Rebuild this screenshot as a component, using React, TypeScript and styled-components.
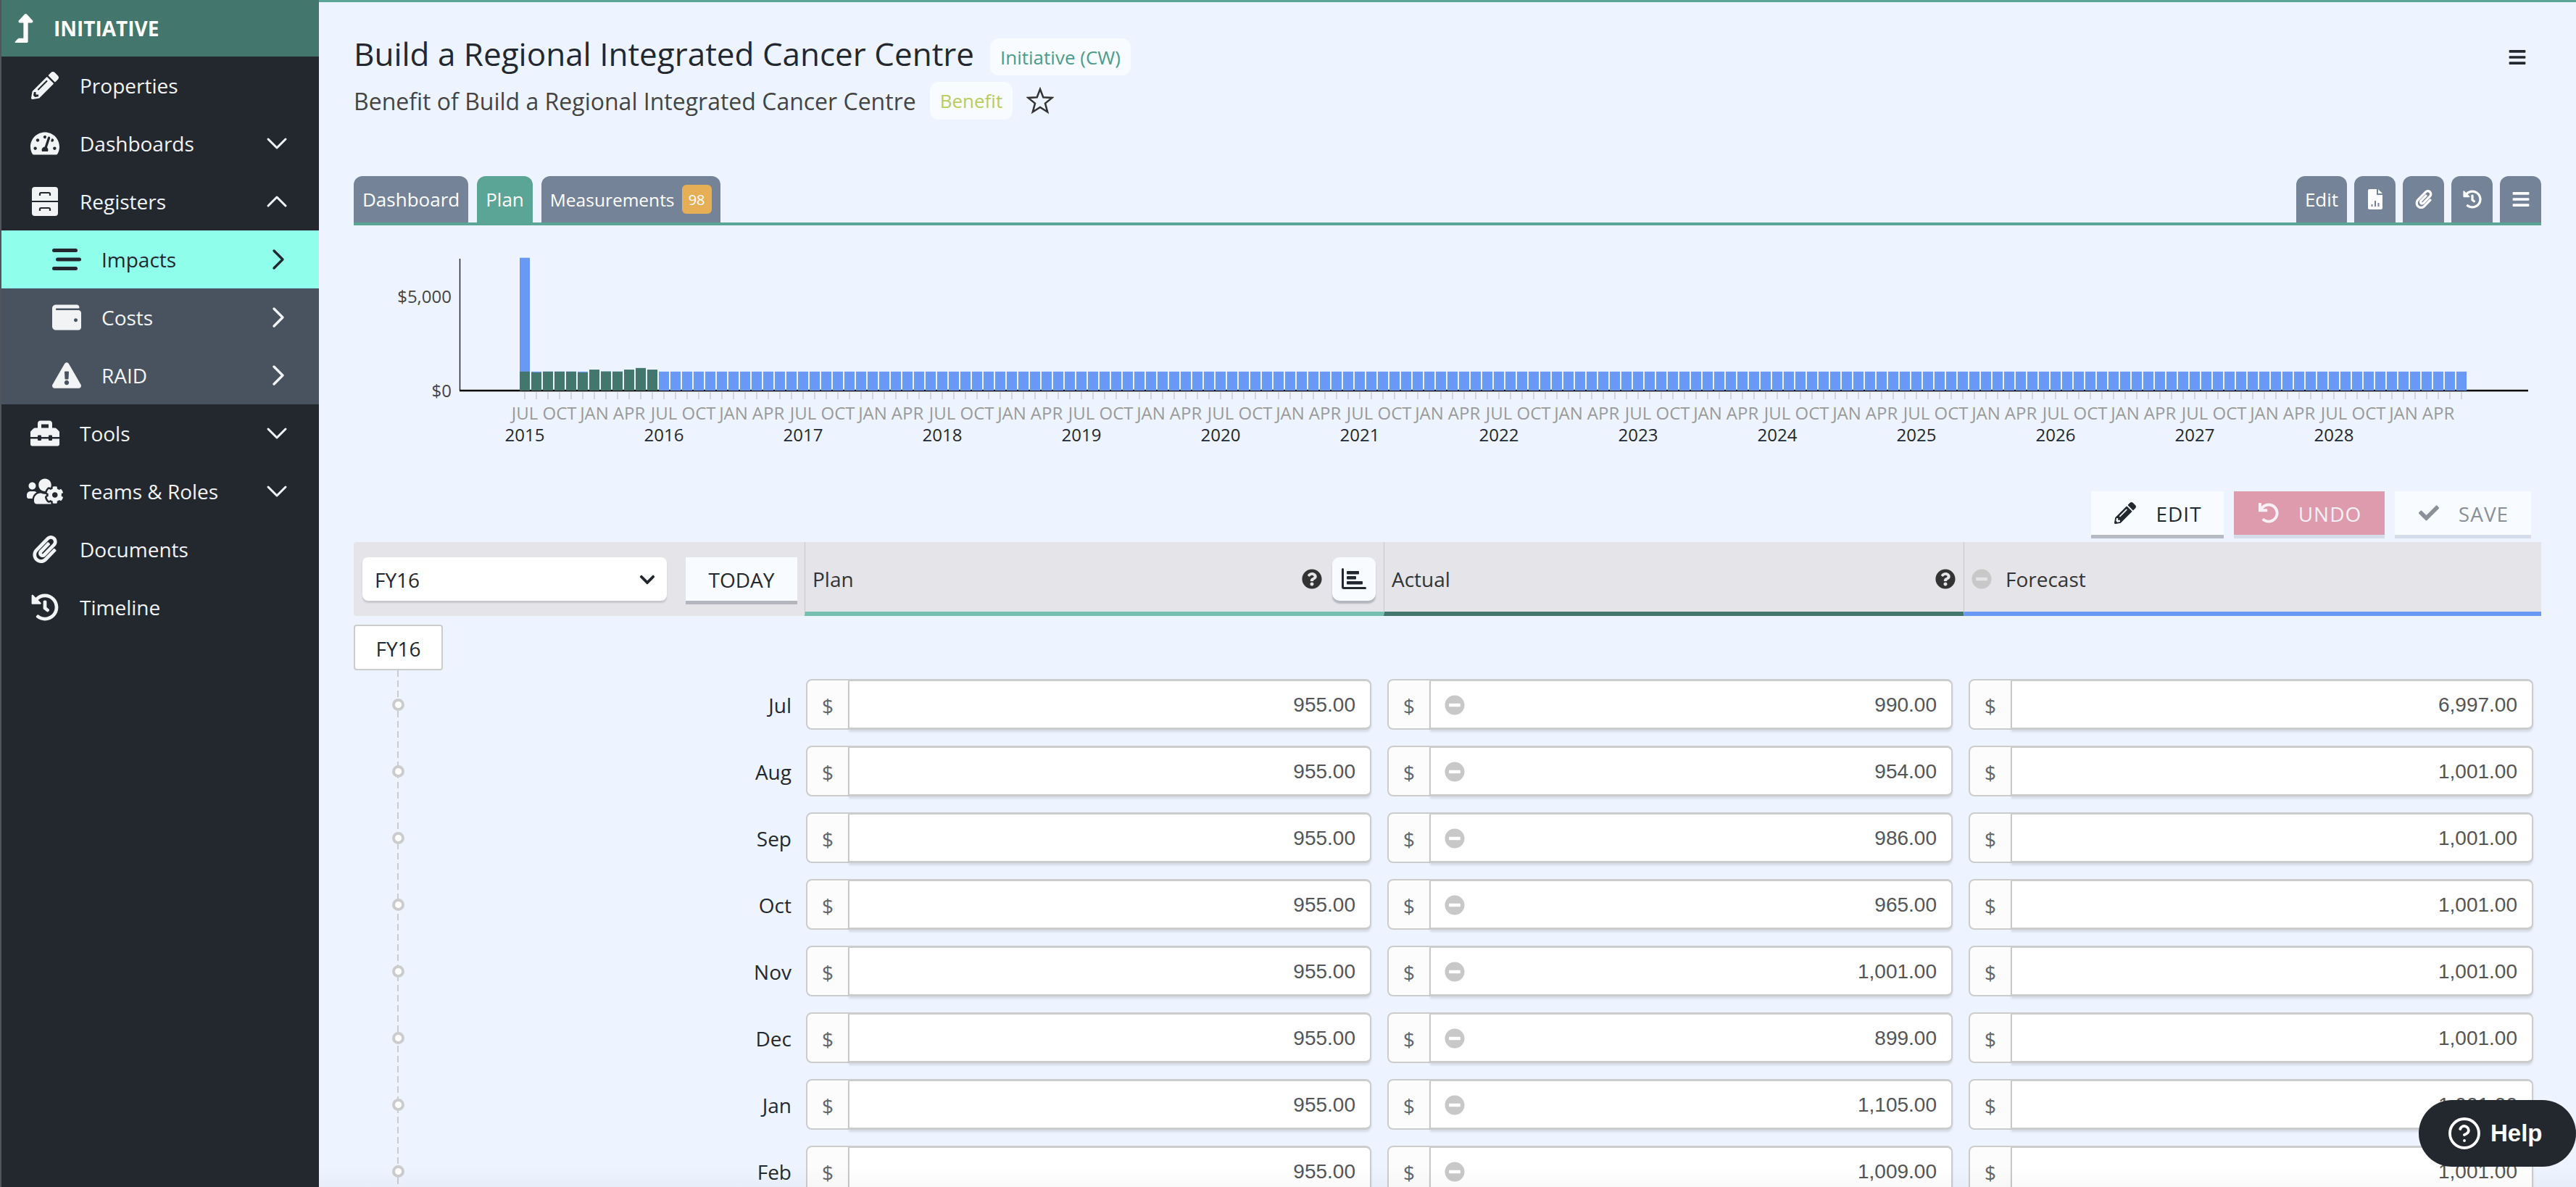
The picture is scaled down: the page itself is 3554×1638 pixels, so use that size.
import React from "react";
import styled, { createGlobalStyle } from "styled-components";
import {
  FaBars,
  FaCheck,
  FaChevronDown,
  FaExclamationTriangle,
  FaHistory,
  FaLevelUpAlt,
  FaMinusCircle,
  FaPaperclip,
  FaPencilAlt,
  FaQuestionCircle,
  FaTachometerAlt,
  FaToolbox,
  FaUndo,
  FaUsersCog,
  FaWallet,
} from "react-icons/fa";
import { ChevronDown, ChevronRight, ChevronUp, CircleHelp } from "lucide-react";

const GlobalStyle = createGlobalStyle`
  html, body {
    margin: 0;
    height: 100%;
    overflow: hidden;
    background: #edf4ff;
    font-family: "Open Sans", sans-serif;
    color: #23282f;
  }
  * { box-sizing: border-box; }
`;

const RegistersIcon = () => (
  <svg width="36" height="40" viewBox="0 0 36 40" fill="currentColor">
    <path d="M4 0h28a4 4 0 0 1 4 4v15H0V4a4 4 0 0 1 4-4z" />
    <path d="M0 21h36v15a4 4 0 0 1-4 4H4a4 4 0 0 1-4-4V21z" />
    <path d="M11 12V9.500a1.500 1.500 0 0 1 1.500-1.500h11A1.500 1.500 0 0 1 25 9.500V12" fill="none" stroke="#23282f" strokeWidth="2.200" />
    <path d="M11 33v-2.500a1.500 1.500 0 0 1 1.500-1.500h11a1.500 1.500 0 0 1 1.500 1.500V33" fill="none" stroke="#23282f" strokeWidth="2.200" />
  </svg>
);

const ImpactsIcon = () => (
  <svg width="40" height="30" viewBox="0 0 40 30" fill="currentColor">
    <rect x="0" y="0" width="35" height="5" rx="2.500" />
    <rect x="5" y="12.500" width="35" height="5" rx="2.500" />
    <rect x="0" y="25" width="35" height="5" rx="2.500" />
  </svg>
);

const FileChartIcon = () => (
  <svg width="20" height="28" viewBox="0 0 20 28" fill="currentColor">
    <path d="M2 0h10v8h8v18a2 2 0 0 1-2 2H2a2 2 0 0 1-2-2V2a2 2 0 0 1 2-2zM14 0l6 6h-6V0zM4.500 21v3h2v-3h-2zM9 16v8h2v-8H9zm4.500 3v5h2v-5h-2z" fillRule="evenodd" />
  </svg>
);

const AxisBarsIcon = () => (
  <svg width="34" height="30" viewBox="0 0 34 30" fill="currentColor">
    <path d="M0 1.500a1.500 1.500 0 0 1 3 0V26h29.500a1.500 1.500 0 0 1 0 3H3a3 3 0 0 1-3-3V1.500z" />
    <rect x="7" y="4" width="17" height="4.500" rx="1" />
    <rect x="7" y="11" width="13" height="4.500" rx="1" />
    <rect x="7" y="18" width="22" height="4.500" rx="1" />
  </svg>
);

const StarOutline = () => (
  <svg width="38" height="38" viewBox="0 0 38 38" fill="none">
    <polygon
      points="19,3 23.300,14.200 35.500,14.900 26,22.600 29.200,34.500 19,27.900 8.800,34.500 12,22.600 2.500,14.900 14.700,14.200"
      stroke="#333"
      strokeWidth="2.500"
    />
  </svg>
);

type MenuRow = {
  label: string;
  icon: React.ReactNode;
  arrow?: "down" | "up" | "right";
  sub?: boolean;
  active?: boolean;
};

const menu: MenuRow[] = [
  { label: "Properties", icon: <FaPencilAlt size={38} /> },
  { label: "Dashboards", icon: <FaTachometerAlt size={40} />, arrow: "down" },
  { label: "Registers", icon: <RegistersIcon />, arrow: "up" },
  { label: "Impacts", icon: <ImpactsIcon />, arrow: "right", sub: true, active: true },
  { label: "Costs", icon: <FaWallet size={40} />, arrow: "right", sub: true },
  { label: "RAID", icon: <FaExclamationTriangle size={40} />, arrow: "right", sub: true },
  { label: "Tools", icon: <FaToolbox size={40} />, arrow: "down" },
  { label: "Teams & Roles", icon: <FaUsersCog size={50} />, arrow: "down" },
  { label: "Documents", icon: <FaPaperclip size={38} /> },
  { label: "Timeline", icon: <FaHistory size={38} /> },
];

const months = ["Jul", "Aug", "Sep", "Oct", "Nov", "Dec", "Jan", "Feb"];
const plan = ["955.00", "955.00", "955.00", "955.00", "955.00", "955.00", "955.00", "955.00"];
const actual = ["990.00", "954.00", "986.00", "965.00", "1,001.00", "899.00", "1,105.00", "1,009.00"];
const forecast = ["6,997.00", "1,001.00", "1,001.00", "1,001.00", "1,001.00", "1,001.00", "1,001.00", "1,001.00"];

const BAR_COUNT = 168;
const actualBars = [1001, 954, 1001, 1001, 1001, 954, 1105, 1009, 1001, 1105, 1190, 1105];
const tickLabels = ["JUL", "OCT", "JAN", "APR"];

function PlanChart() {
  const base = 228;
  const scale = 0.0262;
  const x0 = 229;
  return (
    <ChartSvg width="3018" height="349" viewBox="0 0 3018 349">
      <line x1="146.500" y1="46" x2="146.500" y2={base} stroke="#23282f" strokeWidth="1.500" />
      <line x1="146" y1={base} x2="3000" y2={base} stroke="#000" strokeWidth="2.500" />
      <text x="135" y="107" textAnchor="end" fontSize="24" fill="#444">$5,000</text>
      <text x="135" y="237" textAnchor="end" fontSize="24" fill="#444">$0</text>
      {Array.from({ length: BAR_COUNT }, (_, i) => {
        const x = x0 + i * 16;
        const blue = (i === 0 ? 6997 : 1001) * scale;
        const green = i < actualBars.length ? actualBars[i] * scale : 0;
        return (
          <g key={i}>
            <rect x={x} y={base - blue} width="14" height={blue} fill="#6a98f5" />
            {green > 0 && <rect x={x} y={base - green} width="14" height={green} fill="#43766c" />}
            <line x1={x + 7} y1="230" x2={x + 7} y2="240" stroke="#ccc" strokeWidth="1.500" />
            {i % 3 === 0 && (
              <text x={x + 7} y="268" textAnchor="middle" fontSize="24" fill="#9a9a9a">
                {tickLabels[(i / 3) % 4]}
              </text>
            )}
            {i % 12 === 0 && (
              <text x={x + 7} y="298" textAnchor="middle" fontSize="24" fill="#23282f">
                {2015 + i / 12}
              </text>
            )}
          </g>
        );
      })}
    </ChartSvg>
  );
}

function MoneyInput({ value, minus }: { value: string; minus?: boolean }) {
  return (
    <InputGroup>
      <Prefix>$</Prefix>
      <InputBox>
        {minus && <FaMinusCircle size={28} color="#c8c8c8" />}
        <InputValue>{value}</InputValue>
      </InputBox>
    </InputGroup>
  );
}

export default function App() {
  return (
    <Page>
      <GlobalStyle />
      <Sidebar>
        <SideHeader>
          <FaLevelUpAlt size={40} />
          <span>INITIATIVE</span>
        </SideHeader>
        {menu.map((m) => (
          <MenuItem key={m.label} $sub={m.sub} $active={m.active}>
            <MenuIcon>{m.icon}</MenuIcon>
            <MenuLabel>{m.label}</MenuLabel>
            {m.arrow === "down" && <ChevronDown size={48} strokeWidth={1.5} />}
            {m.arrow === "up" && <ChevronUp size={48} strokeWidth={1.5} />}
            {m.arrow === "right" && <ChevronRight size={48} strokeWidth={1.7} />}
          </MenuItem>
        ))}
      </Sidebar>

      <Main>
        <TitleRow>
          <Title>Build a Regional Integrated Cancer Centre</Title>
          <Badge $color="#4b9c8b">Initiative (CW)</Badge>
          <Burger>
            <FaBars size={26} />
          </Burger>
        </TitleRow>
        <SubRow>
          <SubTitle>Benefit of Build a Regional Integrated Cancer Centre</SubTitle>
          <Badge $color="#b9cc5c">Benefit</Badge>
          <StarOutline />
        </SubRow>

        <TabBar>
          <TabGroup>
            <Tab>Dashboard</Tab>
            <Tab $active>Plan</Tab>
            <MeasureTab>
              Measurements
              <TabCount>98</TabCount>
            </MeasureTab>
          </TabGroup>
          <ToolTabs>
            <EditTab>Edit</EditTab>
            <IconTab><FileChartIcon /></IconTab>
            <IconTab><FaPaperclip size={26} /></IconTab>
            <IconTab><FaHistory size={26} /></IconTab>
            <IconTab><FaBars size={26} /></IconTab>
          </ToolTabs>
        </TabBar>

        <PlanChart />

        <Actions>
          <ActionButton $width={183} $shadow="#b5bac4">
            <FaPencilAlt size={30} />
            <span>EDIT</span>
          </ActionButton>
          <ActionButton $width={208} $bg="#dd9bad" $color="#f6f1f6" $shadow="#d5dcea">
            <FaUndo size={28} />
            <span>UNDO</span>
          </ActionButton>
          <ActionButton $width={188} $color="#8a8f98" $shadow="#d5dcea">
            <FaCheck size={28} />
            <span>SAVE</span>
          </ActionButton>
        </Actions>

        <GridHeader>
          <PeriodCell>
            <PeriodSelect>
              <span>FY16</span>
              <FaChevronDown size={24} />
            </PeriodSelect>
            <TodayButton>TODAY</TodayButton>
          </PeriodCell>
          <HeadCell $line="#75bfb0">
            Plan
            <HeadTools>
              <FaQuestionCircle size={28} color="#333" />
              <ChartToggle>
                <AxisBarsIcon />
              </ChartToggle>
            </HeadTools>
          </HeadCell>
          <HeadCell $line="#43766c">
            Actual
            <HeadTools>
              <FaQuestionCircle size={28} color="#333" />
            </HeadTools>
          </HeadCell>
          <HeadCell $line="#6a98f5">
            <FaMinusCircle size={28} color="#c8c8c8" />
            Forecast
          </HeadCell>
        </GridHeader>

        <YearBox>FY16</YearBox>
        <Rows>
          {months.map((month, i) => (
            <Row key={month}>
              <RowLabel>
                <Dot />
                <MonthName>{month}</MonthName>
              </RowLabel>
              <MoneyInput value={plan[i]} />
              <MoneyInput value={actual[i]} minus />
              <MoneyInput value={forecast[i]} />
            </Row>
          ))}
        </Rows>
      </Main>

      <HelpButton>
        <CircleHelp size={48} strokeWidth={1.9} />
        Help
      </HelpButton>
    </Page>
  );
}

const Page = styled.div`
  display: flex;
  width: 100vw;
  height: 100vh;
  overflow: hidden;
`;

const Sidebar = styled.nav`
  flex: 0 0 440px;
  border-left: 2px solid #50555c;
  background: #23282f;
  color: #f1f3f5;
`;

const SideHeader = styled.div`
  display: flex;
  align-items: center;
  gap: 21px;
  height: 78px;
  padding-left: 11px;
  background: #43766c;
  color: #fff;
  font-size: 28px;
  font-weight: 700;
`;

const MenuItem = styled.div<{ $sub?: boolean; $active?: boolean }>`
  display: flex;
  align-items: center;
  height: 80px;
  padding: 0 ${(p) => (p.$sub ? 32 : 34)}px 0 ${(p) => (p.$sub ? 70 : 40)}px;
  background: ${(p) => (p.$active ? "#8ffeea" : p.$sub ? "#49525f" : "transparent")};
  color: ${(p) => (p.$active ? "#23282f" : "inherit")};
`;

const MenuIcon = styled.div`
  display: flex;
  align-items: center;
  justify-content: center;
  flex: 0 0 40px;
  min-width: 0;
  height: 50px;
  svg {
    flex-shrink: 0;
  }
`;

const MenuLabel = styled.div`
  flex: 1;
  margin-left: 28px;
  font-size: 28px;
`;

const Main = styled.main`
  position: relative;
  flex: 1;
  min-width: 0;
  padding: 50px 48px 0;
  border-top: 3px solid #5aa596;
  background: #edf4ff;
  &::after {
    content: "";
    position: absolute;
    left: 0;
    right: 0;
    bottom: 0;
    height: 28px;
    background: linear-gradient(transparent, rgba(0, 0, 0, 0.025));
  }
`;

const TitleRow = styled.div`
  display: flex;
  align-items: center;
  height: 51px;
`;

const Title = styled.h1`
  margin: 0 22px 9px 0;
  font-size: 44px;
  font-weight: 400;
  line-height: 1;
`;

const Burger = styled.div`
  display: flex;
  margin-left: auto;
  margin-right: 20px;
`;

const SubRow = styled.div`
  display: flex;
  align-items: center;
  gap: 19px;
  height: 52px;
  margin-top: 9px;
`;

const SubTitle = styled.div`
  font-size: 32px;
  color: #444;
`;

const Badge = styled.div<{ $color: string }>`
  display: flex;
  align-items: center;
  height: 100%;
  padding: 0 14px;
  border-radius: 12px;
  background: #f8fbff;
  color: ${(p) => p.$color};
  font-size: 26px;
`;

const TabBar = styled.div`
  display: flex;
  justify-content: space-between;
  height: 68px;
  margin-top: 78px;
  border-bottom: 4px solid #5aa596;
`;

const TabGroup = styled.div`
  display: flex;
  gap: 12px;
`;

const ToolTabs = styled.div`
  display: flex;
  gap: 10px;
`;

const Tab = styled.div<{ $active?: boolean }>`
  display: flex;
  align-items: center;
  padding: 0 12px;
  border-radius: 12px 12px 0 0;
  background: ${(p) => (p.$active ? "#5aa596" : "#758398")};
  color: #fff;
  font-size: 26px;
`;

const MeasureTab = styled(Tab)`
  font-size: 24.5px;
`;

const EditTab = styled(Tab)`
  justify-content: center;
  width: 70px;
  padding: 0;
`;

const IconTab = styled(Tab)`
  justify-content: center;
  width: 57px;
  padding: 0;
`;

const TabCount = styled.span`
  display: flex;
  align-items: center;
  justify-content: center;
  width: 41px;
  height: 40px;
  margin-left: 10px;
  border-radius: 6px;
  background: #e6ae55;
  font-size: 20px;
`;

const ChartSvg = styled.svg`
  display: block;
  font-family: "Open Sans", sans-serif;
`;

const Actions = styled.div`
  display: flex;
  justify-content: flex-end;
  gap: 14px;
  height: 60px;
  margin-top: 18px;
  padding-right: 14px;
`;

const ActionButton = styled.button<{ $width: number; $bg?: string; $color?: string; $shadow: string }>`
  display: flex;
  align-items: center;
  justify-content: center;
  gap: 27px;
  width: ${(p) => p.$width}px;
  height: 60px;
  padding: 0 0 0 2px;
  border: 0;
  background: ${(p) => p.$bg ?? "#f8fbff"};
  color: ${(p) => p.$color ?? "#23282f"};
  box-shadow: 0 5px 0 ${(p) => p.$shadow};
  font-family: inherit;
  font-size: 28px;
  letter-spacing: 1px;
  span {
    padding-top: 2px;
  }
`;

const GridHeader = styled.div`
  display: grid;
  grid-template-columns: 622px 799px 800px 797px;
  height: 102px;
  margin-top: 10px;
  background: #e4e4e9;
  border-radius: 4px 0 0 4px;
`;

const PeriodCell = styled.div`
  display: flex;
  align-items: center;
  gap: 26px;
  padding: 0 10px 0 12px;
`;

const PeriodSelect = styled.div`
  display: flex;
  align-items: center;
  justify-content: space-between;
  width: 420px;
  height: 60px;
  padding: 2px 15px 0 17px;
  border-radius: 8px;
  background: #fff;
  box-shadow: 0 3px 2px #c8c8cc;
  font-size: 28px;
`;

const TodayButton = styled.div`
  display: flex;
  align-items: center;
  justify-content: center;
  width: 154px;
  height: 60px;
  padding-top: 2px;
  background: #f8fbff;
  box-shadow: 0 5px 0 #b5b5bd;
  font-size: 28px;
`;

const HeadCell = styled.div<{ $line: string }>`
  display: flex;
  align-items: center;
  gap: 19px;
  padding: 6px 11px 0 10px;
  border-left: 1px solid #c8c8cc;
  border-bottom: 6px solid ${(p) => p.$line};
  font-size: 28px;
  color: #333;
`;

const HeadTools = styled.div`
  display: flex;
  align-items: center;
  gap: 14px;
  margin-left: auto;
`;

const ChartToggle = styled.div`
  display: flex;
  align-items: center;
  justify-content: center;
  width: 60px;
  height: 60px;
  border-radius: 10px;
  background: #f8fbff;
  box-shadow: 0 4px 2px #b5b5bd;
  color: #23282f;
`;

const YearBox = styled.div`
  display: flex;
  align-items: center;
  justify-content: center;
  width: 123px;
  height: 63px;
  margin-top: 12px;
  padding-top: 2px;
  border: 2px solid #ccc;
  border-radius: 4px;
  background: #fff;
  font-size: 28px;
`;

const Rows = styled.div`
  position: relative;
  &::before {
    content: "";
    position: absolute;
    top: 0;
    bottom: 0;
    left: 60px;
    width: 2px;
    background: repeating-linear-gradient(#ccc 0 9px, transparent 9px 14px);
  }
`;

const Row = styled.div`
  display: grid;
  grid-template-columns: 602px 780px 780px 779px;
  column-gap: 22px;
  height: 92px;
  padding: 12px 0 10px;
`;

const RowLabel = styled.div`
  position: relative;
  display: flex;
  align-items: center;
  padding-left: 53px;
`;

const Dot = styled.div`
  width: 17px;
  height: 17px;
  border: 4px solid #ccc;
  border-radius: 50%;
  background: #fff;
`;

const MonthName = styled.div`
  margin: 2px -2px 0 auto;
  font-size: 28px;
`;

const InputGroup = styled.div`
  display: flex;
  height: 70px;
`;

const Prefix = styled.div`
  display: flex;
  align-items: center;
  justify-content: center;
  flex: 0 0 59px;
  padding-top: 3px;
  border: 2px solid #ccc;
  border-right-width: 1px;
  border-radius: 8px 0 0 8px;
  background: #fcfcfc;
  color: #666;
  font-size: 28px;
`;

const InputBox = styled.div`
  display: flex;
  align-items: center;
  flex: 1;
  padding: 2px 20px 0 19px;
  border: 2px solid #ccc;
  border-width: 3px 2px 3px 1px;
  border-radius: 0 8px 8px 0;
  background: #fff;
  box-shadow: 0 3px 3px rgba(0, 0, 0, 0.1);
`;

const InputValue = styled.div`
  margin-left: auto;
  color: #555;
  font-family: "Liberation Sans", sans-serif;
  font-size: 28px;
`;

const HelpButton = styled.div`
  position: fixed;
  left: 3337px;
  top: 1518px;
  display: flex;
  align-items: center;
  gap: 12px;
  width: 217px;
  height: 92px;
  padding-left: 39px;
  border-radius: 46px;
  background: #23282f;
  color: #fff;
  font-family: "Liberation Sans", sans-serif;
  font-size: 33px;
  font-weight: 700;
`;
